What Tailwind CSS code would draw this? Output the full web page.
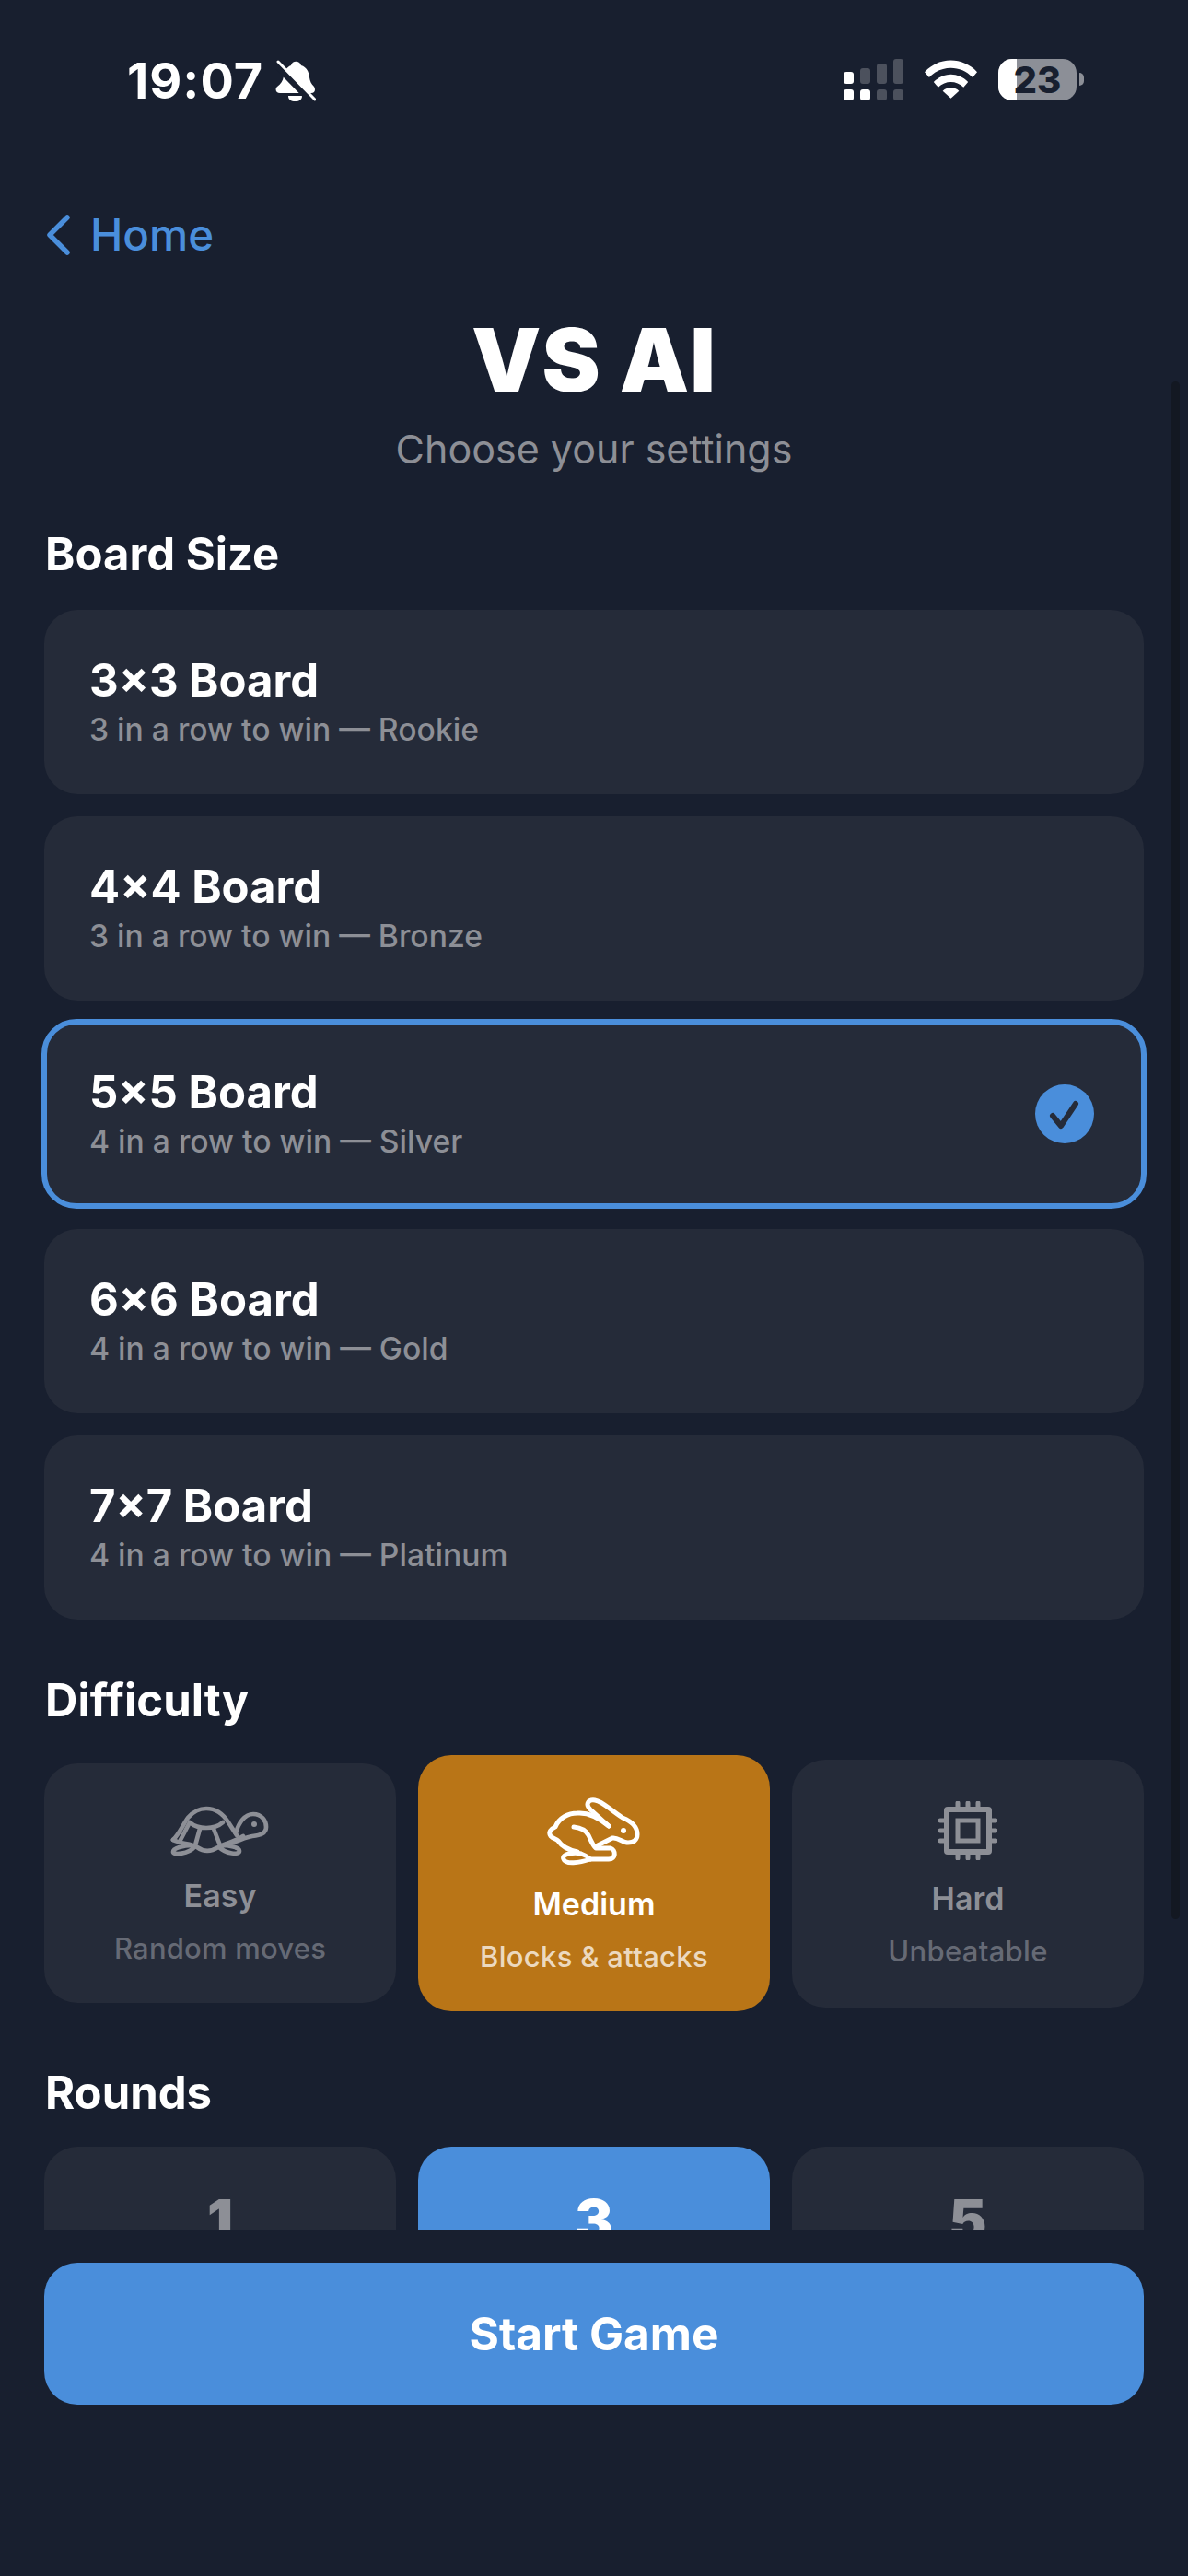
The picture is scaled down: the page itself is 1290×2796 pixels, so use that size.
<!DOCTYPE html>
<html lang="en">
<head>
  <meta charset="UTF-8">
  <meta name="viewport" content="width=device-width, initial-scale=1.0">
  <title>VS AI</title>
  <script src="https://cdn.jsdelivr.net/npm/@tailwindcss/browser@4"></script>
</head>
<body class="bg-[#181f2f] font-['Inter',sans-serif] text-white">
  <div class="relative h-[2796px] w-[1290px] overflow-hidden">

    <!-- status bar -->
    <div class="flex h-[226px] items-start justify-between pt-[60px] pl-[138px] pr-[121px]">
      <div class="flex items-center gap-[13px]">
        <span class="text-[54px] leading-[56px] font-bold tracking-[1px]">19:07</span>
        <svg class="h-[46px] w-[44px]" viewBox="0 0 44 46" fill="#fff">
          <path d="M17 6c1-5 9-6 11 0 6 2 8 6 9 13 .5 4 2 7 5 10 2 3 1 7-3 7H5c-4 0-6-4-3-7 4-3 6-6 7-11 1-6 3-10 8-12z"/>
          <path d="M14 39h15c0 4-3 6-7.500 6S14 43 14 39z"/>
          <path d="M-2 2L42 47" stroke="#181f2f" stroke-width="8"/>
          <path d="M3 2l40 41" stroke="#fff" stroke-width="3" stroke-linecap="round"/>
        </svg>
      </div>
      <div class="flex items-start gap-[23px] pt-[4px]">
        <svg class="h-[45px] w-[65px]" viewBox="0 0 65 45">
          <rect x="0" y="14" width="11" height="13" rx="3" fill="#fff"/>
          <rect x="0" y="33" width="11" height="12" rx="3" fill="#fff"/>
          <rect x="18" y="33" width="11" height="12" rx="3" fill="#fff"/>
          <rect x="18" y="10" width="11" height="17" rx="3" fill="#4c515d"/>
          <rect x="36" y="5" width="11" height="22" rx="3" fill="#4c515d"/>
          <rect x="54" y="0" width="11" height="27" rx="3" fill="#4c515d"/>
          <rect x="36" y="33" width="11" height="12" rx="3" fill="#4c515d"/>
          <rect x="54" y="33" width="11" height="12" rx="3" fill="#4c515d"/>
        </svg>
        <svg class="mt-[1px] h-[42px] w-[57px]" viewBox="0 0 58 42" fill="#fff">
          <path d="M0 13C16-4 42-4 58 13l-5 6C40 5 18 5 5 19z"/>
          <path d="M10 24c11-11 27-11 38 0l-5 6c-8-8-20-8-28 0z"/>
          <path d="M20 34c5-5 13-5 18 0l-9 8z"/>
        </svg>
        <div class="relative flex h-[45px] w-[85px] items-center justify-center overflow-hidden rounded-[15px] bg-[#8c8f97]">
          <div class="absolute inset-y-0 left-0 w-[20px] bg-white"></div>
          <span class="relative text-[40px] leading-none font-extrabold text-[#181f2f]">23</span>
        </div>
      </div>
    </div>
    <div class="absolute top-[79px] left-[1172px] h-[14px] w-[5px] rounded-r-full bg-[#8c8f97]"></div>

    <!-- back link -->
    <a class="flex items-center gap-[22px] pl-[50px] text-[#4a8edb]">
      <svg class="h-[44px] w-[26px]" viewBox="0 0 26 44" fill="none" stroke="currentColor" stroke-width="5.500" stroke-linecap="round" stroke-linejoin="round">
        <path d="M23 3L4 22l19 19"/>
      </svg>
      <span class="text-[47.500px] leading-[58px] font-medium">Home</span>
    </a>

    <!-- heading -->
    <div class="mt-[52px] text-center">
      <h1 class="text-[95px] leading-[110px] font-black tracking-[1px]">VS AI</h1>
      <p class="mt-[16px] text-[43px] leading-[50px] text-[#8d8f96]">Choose your settings</p>
    </div>

    <!-- scrolling settings -->
    <div class="mt-[61px] h-[1847px] overflow-hidden px-[48px]">
      <h2 class="pl-[1px] text-[49px] leading-[58px] font-bold">Board Size</h2>
      <div class="mt-[31px] flex flex-col gap-[24px]">
        <div class="flex h-[200px] flex-col justify-center rounded-[36px] bg-[#252b39] px-[49px]">
          <p class="text-[49px] leading-[58px] font-bold">3×3 Board</p>
          <p class="mt-[2px] text-[33.700px] leading-[44px] font-medium text-[#8d8f96]">3 in a row to win — Rookie</p>
        </div>
        <div class="flex h-[200px] flex-col justify-center rounded-[36px] bg-[#252b39] px-[49px]">
          <p class="text-[49px] leading-[58px] font-bold">4×4 Board</p>
          <p class="mt-[2px] text-[33.700px] leading-[44px] font-medium text-[#8d8f96]">3 in a row to win — Bronze</p>
        </div>
        <div class="mx-[-3px] mt-[-4px] mb-[-2px] flex h-[206px] items-center justify-between rounded-[38px] border-[6px] border-[#4a8edb] bg-[#252b39] pr-[51px] pl-[46px]">
          <div>
            <p class="text-[49px] leading-[58px] font-bold">5×5 Board</p>
            <p class="mt-[2px] text-[33.700px] leading-[44px] font-medium text-[#8d8f96]">4 in a row to win — Silver</p>
          </div>
          <svg class="h-[64px] w-[64px]" viewBox="0 0 64 64">
            <circle cx="32" cy="32" r="32" fill="#4a8edb"/>
            <path d="M19 34l9 11 16-24" fill="none" stroke="#252b39" stroke-width="6" stroke-linecap="round" stroke-linejoin="round"/>
          </svg>
        </div>
        <div class="flex h-[200px] flex-col justify-center rounded-[36px] bg-[#252b39] px-[49px]">
          <p class="text-[49px] leading-[58px] font-bold">6×6 Board</p>
          <p class="mt-[2px] text-[33.700px] leading-[44px] font-medium text-[#8d8f96]">4 in a row to win — Gold</p>
        </div>
        <div class="flex h-[200px] flex-col justify-center rounded-[36px] bg-[#252b39] px-[49px]">
          <p class="text-[49px] leading-[58px] font-bold">7×7 Board</p>
          <p class="mt-[2px] text-[33.700px] leading-[44px] font-medium text-[#8d8f96]">4 in a row to win — Platinum</p>
        </div>
      </div>

      <h2 class="mt-[59px] pl-[1px] text-[49px] leading-[58px] font-bold">Difficulty</h2>
      <div class="mt-[30px] grid h-[278px] grid-cols-3 items-center gap-[24px]">
        <div class="flex h-[260px] flex-col items-center justify-center rounded-[36px] bg-[#252b39] pt-[5px]">
          <svg class="h-[56px] w-[110px]" viewBox="15 19 110 56" fill="none" stroke="#8d8f96" stroke-width="4.700" stroke-linecap="round" stroke-linejoin="round">
            <path d="M19 57C26 50 30 40 35 33C41 26 47 23 55 23C66 23 74 30 79 38L88 52"/>
            <path d="M19 57C28 62 38 60 45 65C52 70 60 70 68 65C74 61 84 60 95 53"/>
            <path d="M37 38C46 46 64 46 73 38M48 45L43 63M63 45L70 63M37 38L27 57"/>
            <path d="M87 50C90 38 97 29 106 29C115 29 120 36 120 43C120 50 114 52 105 53C98 54 88 59 76 62"/>
            <path d="M40 63C30 63 19 66 19 70C19 74 36 72 42 65"/>
            <path d="M70 63C80 63 91 65 91 69C91 74 76 72 69 65"/>
            <circle cx="107" cy="40" r="3" fill="#8d8f96" stroke="none"/>
          </svg>
          <p class="mt-[22px] text-[34px] leading-[42px] font-semibold text-[#8d8f96]">Easy</p>
          <p class="mt-[17px] text-[31px] leading-[38px] font-medium tracking-[0.200px] text-[#666a75]">Random moves</p>
        </div>
        <div class="flex h-[278px] flex-col items-center justify-center rounded-[36px] bg-[#b97517] pt-[5px]">
          <svg class="h-[74px] w-[102px]" viewBox="15 11 102 74" fill="none" stroke="#fff" stroke-width="5" stroke-linecap="round" stroke-linejoin="round">
            <path d="M82 42L62 24C56 18 60 13 67 14C75 15 83 24 97 33C107 37 113 43 113 51C113 58 108 60 103 60C97 60 92 54 86 55L70 63"/>
            <path d="M82 42C70 32 60 27 48 28C38 28 28 33 24 43C19 45 16 49 19 53C22 56 25 56 27 58C31 64 38 68 48 70"/>
            <path d="M44 43C54 44 58 48 60 52C63 58 64 62 68 66L84 66C90 68 90 78 82 78L62 78"/>
            <path d="M62 78C50 82 35 84 33 78C30 72 45 70 52 72C58 74 60 76 62 78"/>
            <circle cx="98" cy="47" r="3" fill="#fff" stroke="none"/>
          </svg>
          <p class="mt-[21px] text-[34px] leading-[42px] font-semibold">Medium</p>
          <p class="mt-[17px] text-[31px] leading-[38px] font-medium tracking-[0.300px] text-[#ecd9bf]">Blocks &amp; attacks</p>
        </div>
        <div class="flex h-[269px] flex-col items-center justify-center rounded-[36px] bg-[#252b39] pt-[3px]">
          <svg class="h-[64px] w-[64px]" viewBox="0 0 64 64" fill="none" stroke="#8d8f96">
            <rect x="9" y="9" width="46" height="46" rx="1" stroke-width="6"/>
            <rect x="21" y="21" width="22" height="22" stroke-width="5"/>
            <path d="M21 2v6M32 2v6M43 2v6M21 56v6M32 56v6M43 56v6M2 21h6M2 32h6M2 43h6M56 21h6M56 32h6M56 43h6" stroke-width="5" stroke-linecap="round"/>
          </svg>
          <p class="mt-[21px] text-[34px] leading-[42px] font-semibold text-[#8d8f96]">Hard</p>
          <p class="mt-[17px] text-[31px] leading-[38px] font-medium tracking-[0.300px] text-[#666a75]">Unbeatable</p>
        </div>
      </div>

      <h2 class="mt-[60px] pl-[1px] text-[49px] leading-[58px] font-bold">Rounds</h2>
      <div class="mt-[29px] grid grid-cols-3 gap-[24px]">
        <div class="flex h-[158px] items-center justify-center rounded-[36px] bg-[#252b39] text-[62px] font-black text-[#8d8f96]">1</div>
        <div class="flex h-[158px] items-center justify-center rounded-[36px] bg-[#4a8edb] text-[62px] font-black">3</div>
        <div class="flex h-[158px] items-center justify-center rounded-[36px] bg-[#252b39] text-[62px] font-black text-[#8d8f96]">5</div>
      </div>
    </div>

    <!-- scrollbar overlay -->
    <div class="absolute top-[414px] left-[1272px] h-[1669px] w-[9px] rounded-full bg-[#131822]"></div>

    <div class="mt-[36px] px-[48px]">
      <button class="h-[154px] w-full rounded-[36px] bg-[#4a8edb] text-[49.500px] font-bold text-white">Start Game</button>
    </div>
  </div>
</body>
</html>
